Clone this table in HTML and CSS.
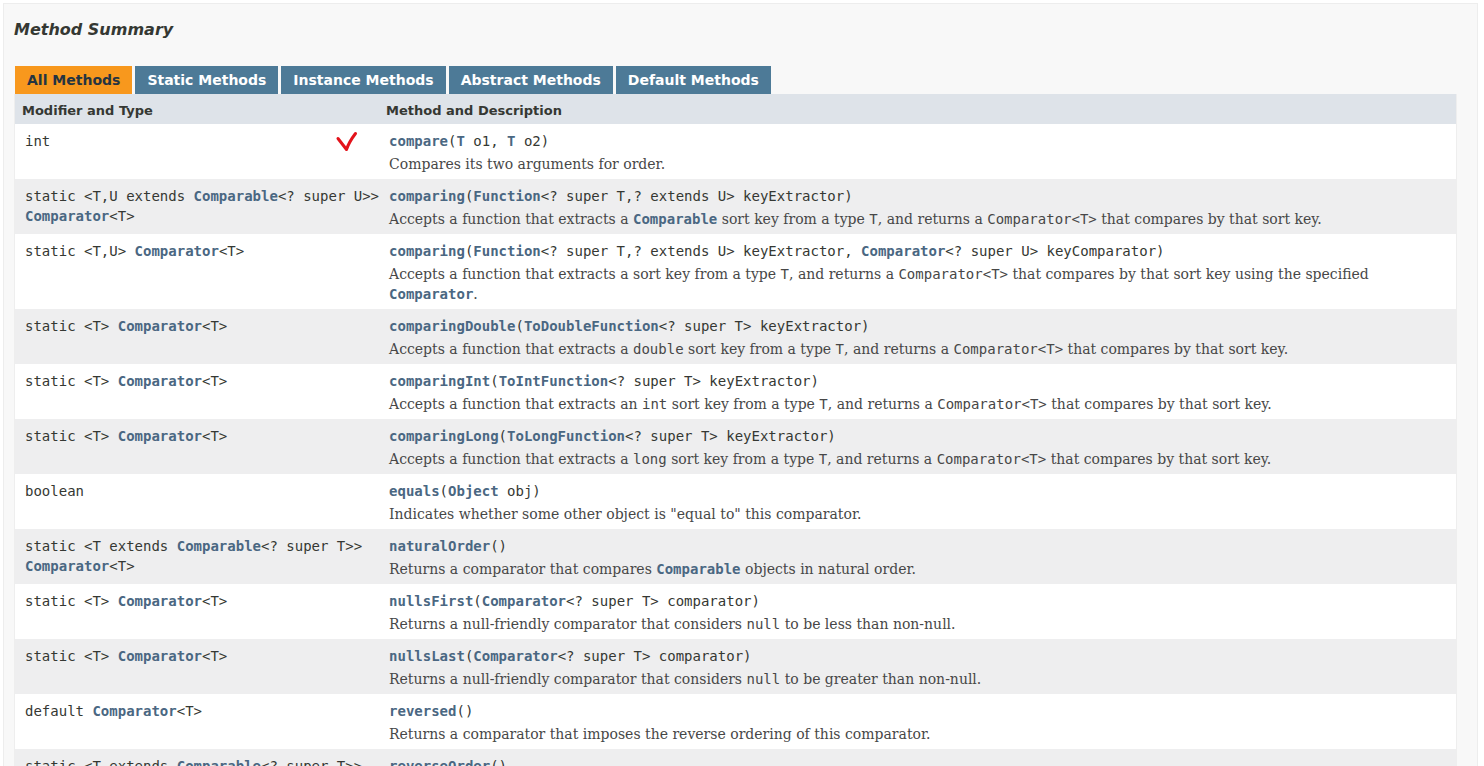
FILE: index.html
```html
<!DOCTYPE html>
<html lang="en">
<head>
<meta charset="utf-8">
<title>Method Summary</title>
<link rel="stylesheet" href="styles.css">
</head>
<body>
<div class="page">
  <div class="block-list">
    <h3 class="summary-title">Method Summary</h3>
    <div class="tabs">
      <span class="tab active">All Methods</span>
      <span class="tab">Static Methods</span>
      <span class="tab">Instance Methods</span>
      <span class="tab">Abstract Methods</span>
      <span class="tab">Default Methods</span>
    </div>
    <table class="member-summary">
      <thead>
        <tr><th class="col-first">Modifier and Type</th><th class="col-last">Method and Description</th></tr>
      </thead>
      <tbody>
        <tr class="alt">
          <td class="col-first mark-cell"><code>int</code>
            <svg class="check" width="24" height="22" viewBox="0 0 24 22"><path d="M3 7.5 L11.5 18.5 Q14 11 20.5 2.5" fill="none" stroke="#e3131b" stroke-width="3" stroke-linecap="round" stroke-linejoin="round"/></svg>
          </td>
          <td class="col-last"><div class="sig"><code><a class="name">compare</a>(<a>T</a>&nbsp;o1, <a>T</a>&nbsp;o2)</code></div>
            <div class="block">Compares its two arguments for order.</div></td>
        </tr>
        <tr class="row">
          <td class="col-first"><code>static &lt;T,U extends <a>Comparable</a>&lt;? super U&gt;&gt;<br><a>Comparator</a>&lt;T&gt;</code></td>
          <td class="col-last"><div class="sig"><code><a class="name">comparing</a>(<a>Function</a>&lt;? super T,? extends U&gt;&nbsp;keyExtractor)</code></div>
            <div class="block">Accepts a function that extracts a <code><a>Comparable</a></code> sort key from a type <code>T</code>, and returns a <code>Comparator&lt;T&gt;</code> that compares by that sort key.</div></td>
        </tr>
        <tr class="alt">
          <td class="col-first"><code>static &lt;T,U&gt;&nbsp;<a>Comparator</a>&lt;T&gt;</code></td>
          <td class="col-last"><div class="sig"><code><a class="name">comparing</a>(<a>Function</a>&lt;? super T,? extends U&gt;&nbsp;keyExtractor, <a>Comparator</a>&lt;? super U&gt;&nbsp;keyComparator)</code></div>
            <div class="block">Accepts a function that extracts a sort key from a type <code>T</code>, and returns a <code>Comparator&lt;T&gt;</code> that compares by that sort key using the specified <code><a>Comparator</a></code>.</div></td>
        </tr>
        <tr class="row">
          <td class="col-first"><code>static &lt;T&gt;&nbsp;<a>Comparator</a>&lt;T&gt;</code></td>
          <td class="col-last"><div class="sig"><code><a class="name">comparingDouble</a>(<a>ToDoubleFunction</a>&lt;? super T&gt;&nbsp;keyExtractor)</code></div>
            <div class="block">Accepts a function that extracts a <code>double</code> sort key from a type <code>T</code>, and returns a <code>Comparator&lt;T&gt;</code> that compares by that sort key.</div></td>
        </tr>
        <tr class="alt">
          <td class="col-first"><code>static &lt;T&gt;&nbsp;<a>Comparator</a>&lt;T&gt;</code></td>
          <td class="col-last"><div class="sig"><code><a class="name">comparingInt</a>(<a>ToIntFunction</a>&lt;? super T&gt;&nbsp;keyExtractor)</code></div>
            <div class="block">Accepts a function that extracts an <code>int</code> sort key from a type <code>T</code>, and returns a <code>Comparator&lt;T&gt;</code> that compares by that sort key.</div></td>
        </tr>
        <tr class="row">
          <td class="col-first"><code>static &lt;T&gt;&nbsp;<a>Comparator</a>&lt;T&gt;</code></td>
          <td class="col-last"><div class="sig"><code><a class="name">comparingLong</a>(<a>ToLongFunction</a>&lt;? super T&gt;&nbsp;keyExtractor)</code></div>
            <div class="block">Accepts a function that extracts a <code>long</code> sort key from a type <code>T</code>, and returns a <code>Comparator&lt;T&gt;</code> that compares by that sort key.</div></td>
        </tr>
        <tr class="alt">
          <td class="col-first"><code>boolean</code></td>
          <td class="col-last"><div class="sig"><code><a class="name">equals</a>(<a>Object</a>&nbsp;obj)</code></div>
            <div class="block">Indicates whether some other object is "equal to" this comparator.</div></td>
        </tr>
        <tr class="row">
          <td class="col-first"><code>static &lt;T extends <a>Comparable</a>&lt;? super T&gt;&gt;<br><a>Comparator</a>&lt;T&gt;</code></td>
          <td class="col-last"><div class="sig"><code><a class="name">naturalOrder</a>()</code></div>
            <div class="block">Returns a comparator that compares <code><a>Comparable</a></code> objects in natural order.</div></td>
        </tr>
        <tr class="alt">
          <td class="col-first"><code>static &lt;T&gt;&nbsp;<a>Comparator</a>&lt;T&gt;</code></td>
          <td class="col-last"><div class="sig"><code><a class="name">nullsFirst</a>(<a>Comparator</a>&lt;? super T&gt;&nbsp;comparator)</code></div>
            <div class="block">Returns a null-friendly comparator that considers <code>null</code> to be less than non-null.</div></td>
        </tr>
        <tr class="row">
          <td class="col-first"><code>static &lt;T&gt;&nbsp;<a>Comparator</a>&lt;T&gt;</code></td>
          <td class="col-last"><div class="sig"><code><a class="name">nullsLast</a>(<a>Comparator</a>&lt;? super T&gt;&nbsp;comparator)</code></div>
            <div class="block">Returns a null-friendly comparator that considers <code>null</code> to be greater than non-null.</div></td>
        </tr>
        <tr class="alt">
          <td class="col-first"><code>default <a>Comparator</a>&lt;T&gt;</code></td>
          <td class="col-last"><div class="sig"><code><a class="name">reversed</a>()</code></div>
            <div class="block">Returns a comparator that imposes the reverse ordering of this comparator.</div></td>
        </tr>
        <tr class="row">
          <td class="col-first"><code>static &lt;T extends <a>Comparable</a>&lt;? super T&gt;&gt;<br><a>Comparator</a>&lt;T&gt;</code></td>
          <td class="col-last"><div class="sig"><code><a class="name">reverseOrder</a>()</code></div>
            <div class="block">Returns a comparator that imposes the reverse of the <em>natural ordering</em>.</div></td>
        </tr>
      </tbody>
    </table>
  </div>
</div>
</body>
</html>
```
FILE: styles.css
```css
html, body {
  margin: 0;
  padding: 0;
  background: #ffffff;
}
body {
  font-family: "DejaVu Sans", Arial, sans-serif;
  font-size: 14px;
  color: #353833;
}
.page {
  padding: 3px 6px 0 3px;
}
.block-list {
  border: 1px solid #ededed;
  background: #f8f8f8;
  padding: 0 20px 5px 10px;
}
.summary-title {
  margin: 16px 0 27px;
  font-size: 16px;
  line-height: 19px;
  font-style: italic;
  font-weight: bold;
  color: #353833;
}
.tabs {
  display: flex;
  gap: 3px;
  padding-left: 1px;
}
.tab {
  display: block;
  height: 16px;
  padding: 6px 12px 6px;
  background: #4d7a97;
  color: #ffffff;
  font-size: 14px;
  font-weight: bold;
  line-height: 16px;
  white-space: nowrap;
}
.tab.active {
  background: #f8981d;
  color: #253441;
}
.member-summary {
  width: 100%;
  border-collapse: collapse;
  border-spacing: 0;
  border-left: 1px solid #eeeeee;
  border-right: 1px solid #eeeeee;
  border-bottom: 1px solid #eeeeee;
}
.member-summary th {
  background: #dee3e9;
  text-align: left;
  padding: 9px 3px 6px 7px;
  font-size: 13px;
  line-height: 15px;
  font-weight: bold;
  color: #353833;
}
.member-summary td {
  vertical-align: top;
  padding: 7px 0 3px 10px;
  font-family: "DejaVu Sans Mono", monospace;
  font-size: 14px;
  line-height: 20px;
  text-align: left;
}
.member-summary .col-first {
  width: 25%;
  white-space: nowrap;
}
tr.alt {
  background: #ffffff;
}
tr.row {
  background: #eeeeef;
}
code {
  font-family: "DejaVu Sans Mono", monospace;
  font-size: 14px;
  line-height: 1;
}
a {
  color: #4a6782;
  font-weight: bold;
  text-decoration: none;
}
.sig {
  height: 20px;
}
.block {
  margin: 3px 10px 2px 0;
  font-family: "DejaVu Serif", Georgia, "Times New Roman", serif;
  font-size: 14px;
  line-height: 20px;
  color: #474747;
}
.mark-cell {
  position: relative;
}
.check {
  position: absolute;
  left: 320px;
  top: 7px;
}
```
